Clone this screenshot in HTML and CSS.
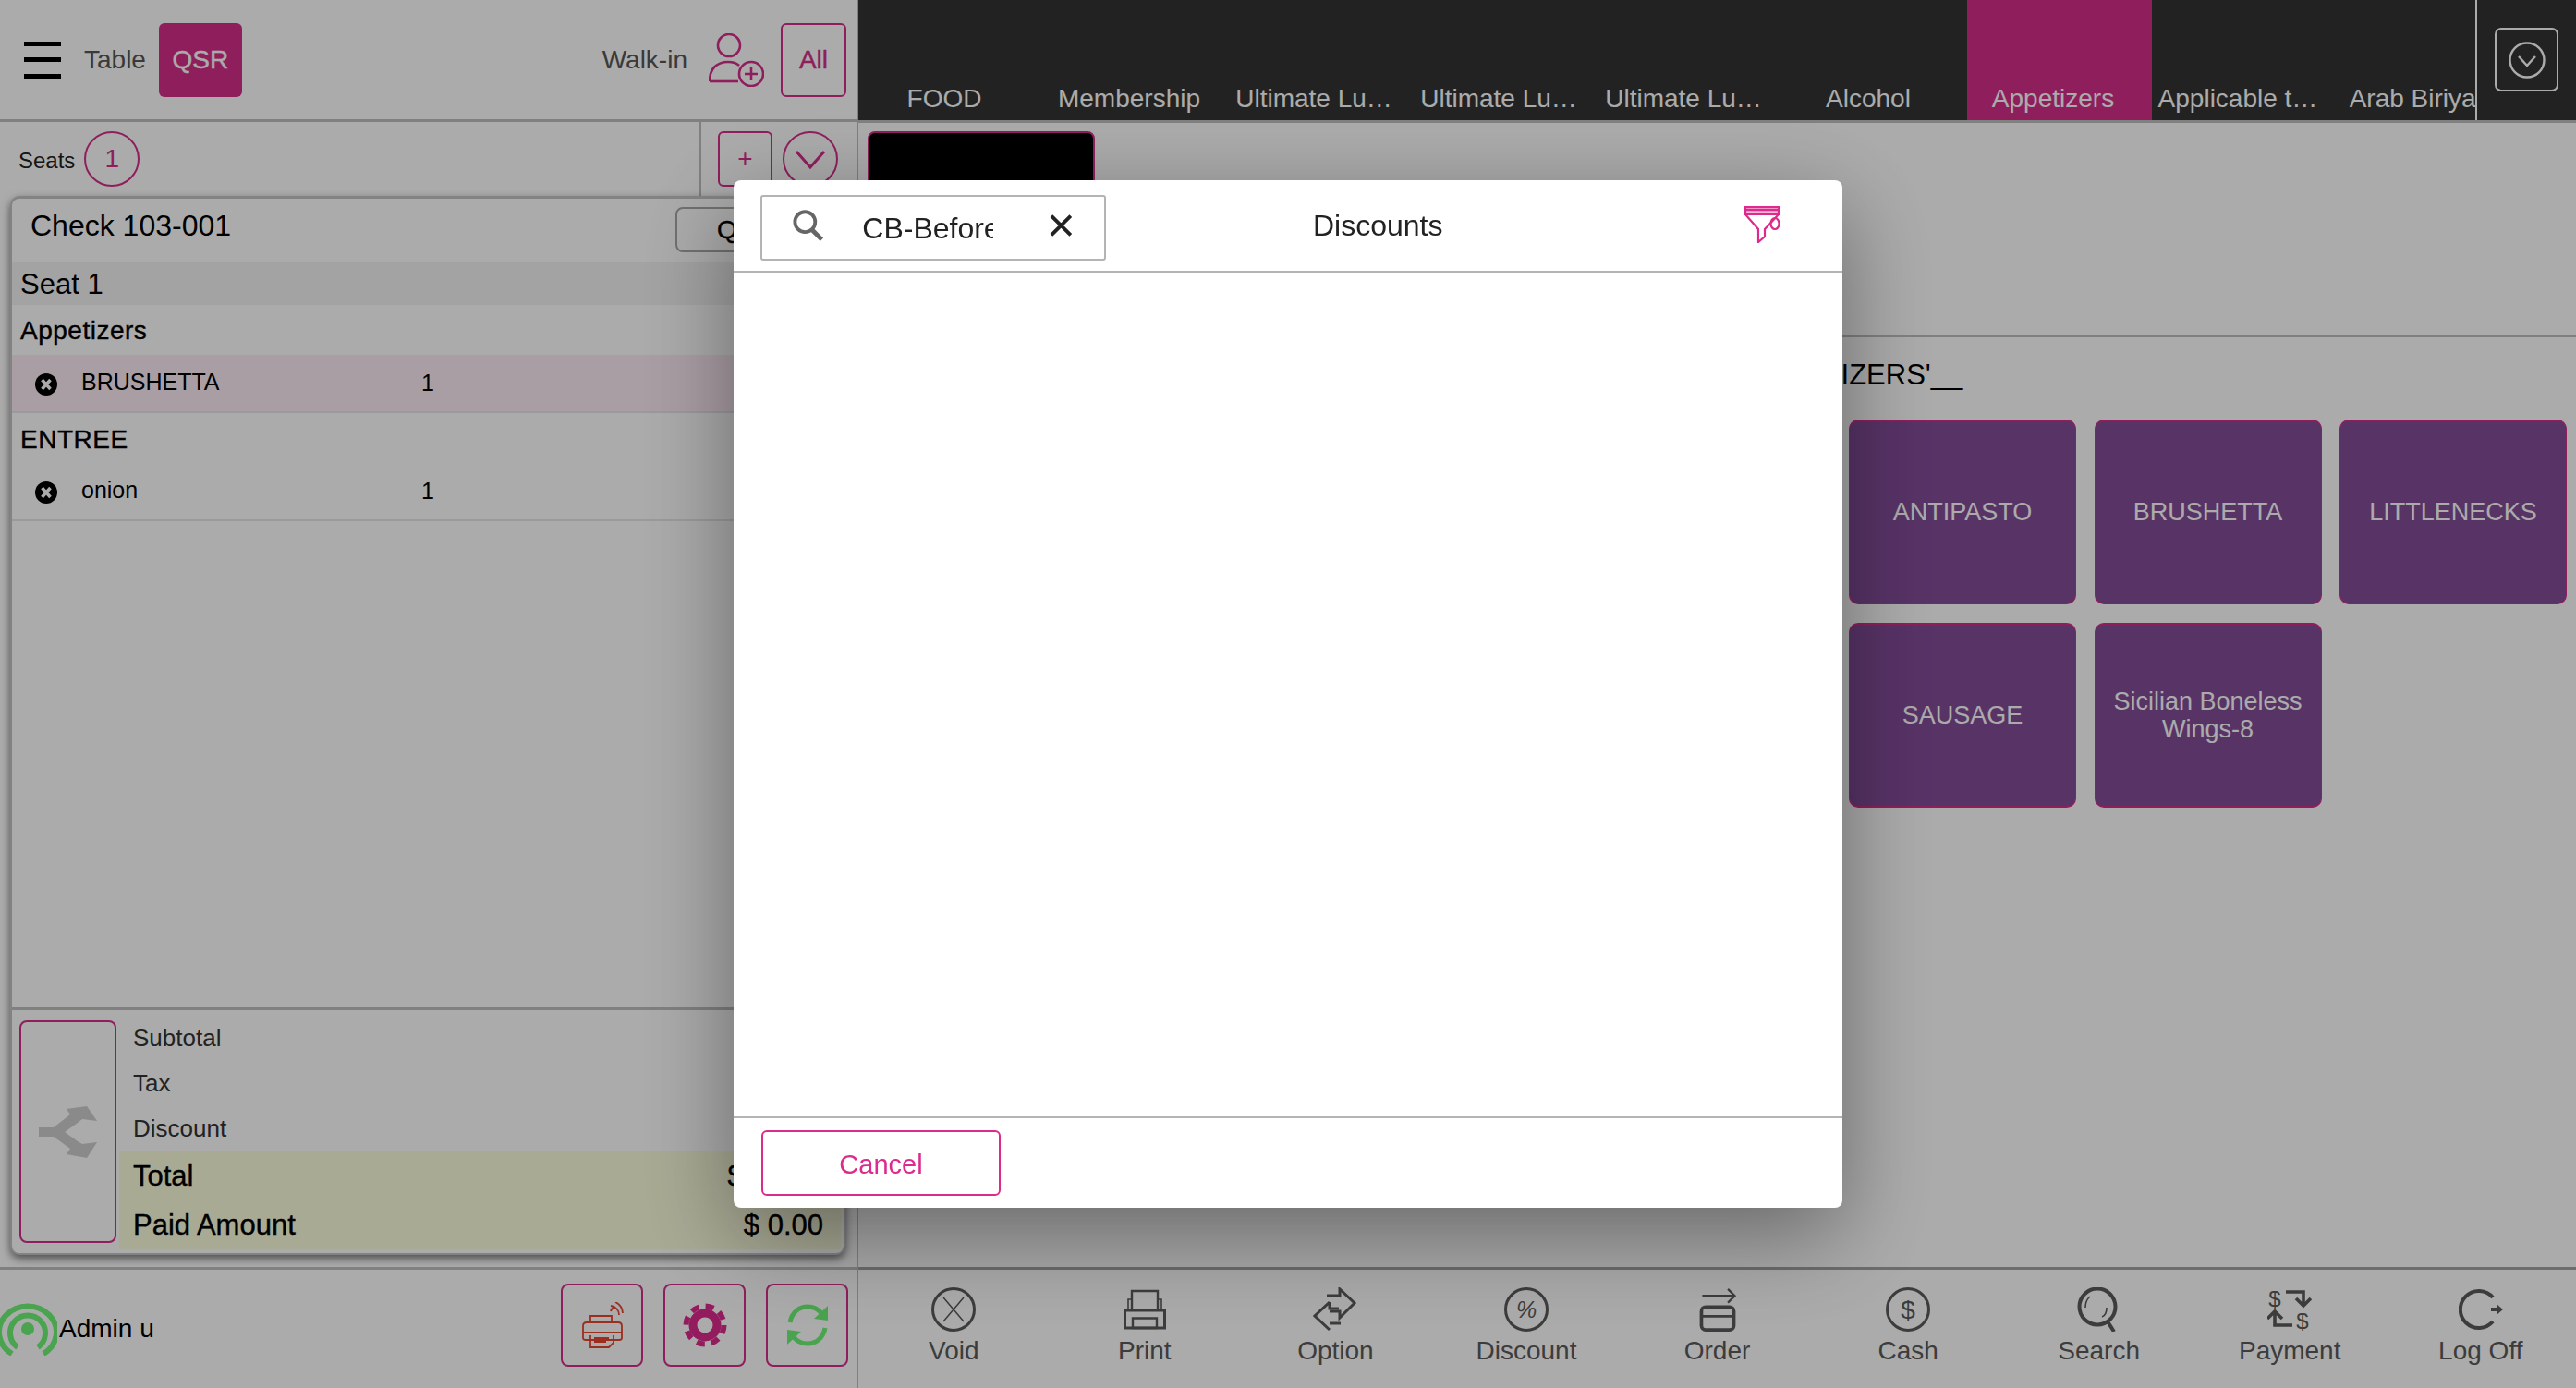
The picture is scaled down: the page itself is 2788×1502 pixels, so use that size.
FILE: index.html
```html
<!DOCTYPE html>
<html lang="en">
<head>
  <meta charset="UTF-8">
  <title>POS - Discounts</title>
  <link rel="stylesheet" href="styles.css">
</head>
<body>

  <div class="app">

    <!-- left: order panel -->
    <section class="order-panel">
      <header class="order-top">
        <div class="hamburger"><span></span><span></span><span></span></div>
        <span class="table-label">Table</span>
        <button class="qsr-btn">QSR</button>
        <span class="walkin-label">Walk-in</span>
        <svg class="walkin-icon" width="60" height="58" viewBox="0 0 60 58" fill="none" stroke="#d62e8a" stroke-width="2.6">
          <circle cx="22" cy="13" r="12"/>
          <path d="M1 52 C1 38 9 31 21 31 C26 31 30 32 33 35"/>
          <path d="M1 52 H32"/>
          <circle cx="46" cy="44" r="13"/>
          <path d="M46 37 V51 M39 44 H53"/>
        </svg>
        <button class="all-btn">All</button>
      </header>

      <div class="seats-row">
        <span class="seats-label">Seats</span>
        <span class="seat-circle">1</span>
        <div class="seats-tools">
          <button class="plus-btn">+</button>
          <span class="chevron-circle">
            <svg width="36" height="24" viewBox="0 0 36 24" fill="none" stroke="#d62e8a" stroke-width="3"><path d="M3 4 L18 21 L33 4"/></svg>
          </span>
        </div>
      </div>

      <div class="check-card">
        <div class="check-head">
          <span class="check-title">Check 103-001</span>
          <button class="quick-btn">Quick</button>
        </div>
        <div class="seat-row">Seat 1</div>
        <div class="group-row">Appetizers</div>
        <div class="item-row selected">
          <svg class="item-x" width="24" height="24" viewBox="0 0 24 24"><circle cx="12" cy="12" r="12" fill="#000"/><path d="M7.500 7 L16.500 17 M16.500 7 L7.500 17" stroke="#fff" stroke-width="3.500"/></svg>
          <span class="item-name">BRUSHETTA</span>
          <span class="item-qty">1</span>
        </div>
        <div class="group-row entree">ENTREE</div>
        <div class="item-row">
          <svg class="item-x" width="24" height="24" viewBox="0 0 24 24"><circle cx="12" cy="12" r="12" fill="#000"/><path d="M7.500 7 L16.500 17 M16.500 7 L7.500 17" stroke="#fff" stroke-width="3.500"/></svg>
          <span class="item-name">onion</span>
          <span class="item-qty">1</span>
        </div>

        <div class="check-spacer"></div>

        <div class="totals">
          <button class="split-btn">
            <svg width="64" height="56" viewBox="0 0 64 56" fill="#cecece">
              <path d="M0 23 H16 L34 9 L30 3 L52 0 L63 16 L47 14 L42 18 L28 28 L42 38 L47 41 L63 39 L52 56 L30 52 L34 46 L16 33 H0 Z"/>
            </svg>
          </button>
          <div class="totals-rows">
            <div class="total-row"><span>Subtotal</span><span>$ 10.00</span></div>
            <div class="total-row"><span>Tax</span><span>$ 0.00</span></div>
            <div class="total-row"><span>Discount</span><span>$ 0.00</span></div>
            <div class="total-band">
              <div class="band-row"><span>Total</span><span>$ 10.00</span></div>
              <div class="band-row"><span>Paid Amount</span><span>$ 0.00</span></div>
            </div>
          </div>
        </div>
      </div>

      <footer class="status-bar">
        <svg class="signal-icon" width="62" height="58" viewBox="0 0 62 58" fill="none" stroke="#6ef376" stroke-width="6">
          <circle cx="30" cy="29" r="7" fill="#6ef376" stroke="none"/>
          <path d="M19 49 A19 19 0 1 1 41 49"/>
          <path d="M13 56 A31 28 0 1 1 47 56" stroke-width="6"/>
        </svg>
        <span class="admin-label">Admin u</span>
        <button class="tool-btn">
          <svg width="46" height="50" viewBox="0 0 46 50" fill="none" stroke="#e8452f" stroke-width="1.8">
            <path d="M2 26 Q2 22 6 22 H40 Q44 22 44 26 V39 Q44 41 41 41 H5 Q2 41 2 39 Z"/>
            <path d="M10 22 V15 H33 V22"/>
            <path d="M2 33 H44"/>
            <path d="M10 36 V49 H30 L35 44 V36"/>
            <path d="M14 39 H30 M14 43 H27"/>
            <path d="M32 10 A5 5 0 0 1 36 6 M32 4 A10 10 0 0 1 41 14 M37 0 A14 14 0 0 1 45 12"/>
          </svg>
        </button>
        <button class="tool-btn">
          <svg width="50" height="50" viewBox="0 0 50 50" fill="none" stroke="#dc2b8c">
            <circle cx="25" cy="25" r="13" stroke-width="9"/>
            <circle cx="25" cy="25" r="20.5" stroke-width="6" stroke-dasharray="9 7.1"/>
          </svg>
        </button>
        <button class="tool-btn">
          <svg width="50" height="46" viewBox="0 0 50 46" fill="none" stroke="#6ef376" stroke-width="5">
            <path d="M6 20 C8 9 16 3 25 3 C31 3 36 5 40 10"/>
            <path d="M44 26 C42 37 34 43 25 43 C19 43 14 41 10 36"/>
            <path d="M47 2 L47 18 L32 16 Z" fill="#6ef376" stroke="none"/>
            <path d="M3 44 L3 28 L18 30 Z" fill="#6ef376" stroke="none"/>
          </svg>
        </button>
      </footer>
    </section>

    <!-- right: menu -->
    <section class="menu-panel">
      <div class="tab-bar">
        <nav class="tabs">
          <a class="tab">FOOD</a>
          <a class="tab">Membership</a>
          <a class="tab">Ultimate Lu…</a>
          <a class="tab">Ultimate Lu…</a>
          <a class="tab">Ultimate Lu…</a>
          <a class="tab">Alcohol</a>
          <a class="tab active">Appetizers</a>
          <a class="tab">Applicable t…</a>
          <a class="tab">Arab Biriyani</a>
        </nav>
        <div class="tab-more">
          <button class="tab-more-btn">
            <svg width="40" height="40" viewBox="0 0 40 40" fill="none" stroke="#fff" stroke-width="2.4">
              <circle cx="20" cy="20" r="18.5"/>
              <path d="M11 16 L20 26 L29 16"/>
            </svg>
          </button>
        </div>
      </div>

      <div class="sub-groups">
        <div class="black-tile"></div>
      </div>

      <div class="menu-items">
        <h2 class="menu-title">'APPETIZERS'__</h2>
        <div class="menu-grid">
          <div class="menu-card">ANTIPASTO</div>
          <div class="menu-card">BRUSHETTA</div>
          <div class="menu-card">LITTLENECKS</div>
          <div class="menu-card">SAUSAGE</div>
          <div class="menu-card">Sicilian Boneless Wings-8</div>
        </div>
      </div>

      <footer class="action-bar">
        <div class="action">
          <svg width="48" height="48" viewBox="0 0 48 48" fill="none" stroke="#5a5a5a" stroke-width="3">
            <circle cx="24" cy="24" r="22.5"/>
            <path d="M13 11 L35 37 M35 11 L13 37" stroke-width="1.5"/>
          </svg>
          <span>Void</span>
        </div>
        <div class="action">
          <svg width="48" height="48" viewBox="0 0 48 48" fill="none" stroke="#5a5a5a" stroke-width="3">
            <path d="M10 25 V4 H38 V25" stroke-width="2.4"/>
            <path d="M10 13 H6 V25 M38 13 H42 V25" stroke-width="1.6"/>
            <path d="M2.500 25 H45.500 V44 H2.500 Z"/>
            <path d="M11 33.500 H37 V44 H11 Z" stroke-width="2.400"/>
          </svg>
          <span>Print</span>
        </div>
        <div class="action">
          <svg width="48" height="48" viewBox="0 0 48 48" fill="none" stroke="#5a5a5a" stroke-width="3">
            <path d="M15 9 H29 V2 L45 17 L29 33 V26 H18"/>
            <path d="M18 16 L2 31 L18 46 M18 39 H30 M18 16 V23 H28"/>
          </svg>
          <span>Option</span>
        </div>
        <div class="action">
          <svg width="48" height="48" viewBox="0 0 48 48" fill="none" stroke="#5a5a5a" stroke-width="3">
            <circle cx="24" cy="24" r="22.5"/>
            <text class="icon-glyph" x="24" y="33" text-anchor="middle" font-size="25" font-style="italic">%</text>
          </svg>
          <span>Discount</span>
        </div>
        <div class="action">
          <svg width="48" height="52" viewBox="0 0 48 52" fill="none" stroke="#5a5a5a" stroke-width="4">
            <path d="M6 10 H42 M36 2 L44 10 L36 18" stroke-width="2.500"/>
            <rect x="5" y="23" width="38" height="27" rx="5"/>
            <path d="M5 34 H43" stroke-width="3"/>
          </svg>
          <span>Order</span>
        </div>
        <div class="action">
          <svg width="48" height="48" viewBox="0 0 48 48" fill="none" stroke="#5a5a5a" stroke-width="3">
            <circle cx="24" cy="24" r="22.5"/>
            <text class="icon-glyph" x="24" y="34" text-anchor="middle" font-size="28">$</text>
          </svg>
          <span>Cash</span>
        </div>
        <div class="action">
          <svg width="48" height="48" viewBox="0 0 48 48" fill="none" stroke="#5a5a5a" stroke-width="4">
            <circle cx="22" cy="21" r="19.500"/>
            <path d="M33 37 L40 48"/>
            <path d="M9 22 Q9 14 14 10 M32 22 Q32 30 27 32" stroke-width="1.600"/>
          </svg>
          <span>Search</span>
        </div>
        <div class="action">
          <svg width="48" height="48" viewBox="0 0 48 48" fill="none" stroke="#5a5a5a" stroke-width="4">
            <text class="icon-glyph" x="8" y="21" text-anchor="middle" font-size="24">$</text>
            <text class="icon-glyph" x="38" y="45" text-anchor="middle" font-size="24">$</text>
            <path d="M20 5 H39 V19 M31 12 L39 20 L47 12" stroke-width="3.600"/>
            <path d="M27 41 H8 V27 M0 34 L8 26 L16 34" stroke-width="3.600"/>
          </svg>
          <span>Payment</span>
        </div>
        <div class="action">
          <svg width="48" height="48" viewBox="0 0 48 48" fill="none" stroke="#5a5a5a" stroke-width="4">
            <path d="M37 11 A20 20 0 1 0 37 37"/>
            <path d="M35 22 H41 V18 L48 24 L41 30 V26 H35 Z" fill="#5a5a5a" stroke="none"/>
          </svg>
          <span>Log Off</span>
        </div>
      </footer>
    </section>
  </div>

  <!-- discounts dialog -->
  <div class="overlay">
    <div class="modal">
      <div class="modal-head">
        <div class="search-box">
          <svg width="36" height="36" viewBox="0 0 36 36" fill="none" stroke="#666" stroke-width="4">
            <circle cx="14" cy="14" r="11.500"/>
            <path d="M22 23 L33 34" stroke-width="5"/>
          </svg>
          <input class="search-input" type="text" value="CB-Before">
          <svg width="26" height="26" viewBox="0 0 26 26" fill="none" stroke="#222" stroke-width="4">
            <path d="M2 2 L24 24 M24 2 L2 24"/>
          </svg>
        </div>
        <span class="modal-title">Discounts</span>
        <svg class="filter-icon" width="40" height="40" viewBox="0 0 40 40" fill="none" stroke="#dc2b8c" stroke-width="2.200">
          <path d="M1 1 H37 V9 H1 Z" fill="#f7b6da"/>
          <path d="M1 4 H37" stroke-width="2.500"/>
          <path d="M1 9 L15 25 V39 L22 33 V25 L37 9"/>
          <ellipse cx="33" cy="19" rx="4.500" ry="6"/>
        </svg>
      </div>
      <div class="modal-body"></div>
      <div class="modal-foot">
        <button class="cancel-btn">Cancel</button>
      </div>
    </div>
  </div>

</body>
</html>
```

FILE: styles.css
```css
* {
  box-sizing: border-box;
}
html, body {
  margin: 0;
  height: 100%;
}
body {
  font-family: "Liberation Sans", Arial, sans-serif;
  background-color: #fff;
  color: #000;
  overflow: hidden;
}
button {
  font-family: inherit;
  background: none;
  padding: 0;
  cursor: pointer;
}
.app {
  display: flex;
  height: 1502px;
}

/* order panel */
.order-panel {
  width: 929px;
  flex-shrink: 0;
  display: flex;
  flex-direction: column;
  border-right: 2px solid #bfbfbf;
}
.order-top {
  height: 132px;
  flex-shrink: 0;
  display: flex;
  align-items: center;
  padding: 0 11px 0 26px;
  border-bottom: 3px solid #bfbfbf;
}
.hamburger {
  width: 40px;
  height: 40px;
  display: flex;
  flex-direction: column;
  justify-content: space-between;
}
.hamburger span {
  display: block;
  height: 5px;
  background-color: #000;
}
.table-label {
  margin-left: 25px;
  font-size: 28px;
  color: #575757;
}
.qsr-btn {
  width: 90px;
  height: 80px;
  margin-left: 14px;
  border: none;
  border-radius: 6px;
  background-color: #d62e8a;
  color: #fff;
  font-size: 28px;
  -webkit-text-stroke: 0.4px;
}
.walkin-label {
  margin-left: auto;
  font-size: 28px;
  color: #575757;
}
.walkin-icon {
  margin-left: 23px;
}
.all-btn {
  width: 71px;
  height: 80px;
  margin-left: 18px;
  border: 2px solid #d62e8a;
  border-radius: 6px;
  color: #d62e8a;
  font-size: 28px;
  -webkit-text-stroke: 0.4px;
}
.seats-row {
  height: 80px;
  flex-shrink: 0;
  display: flex;
  align-items: center;
  padding-left: 20px;
}
.seats-label {
  font-size: 24px;
  color: #222;
  margin-top: 3px;
}
.seat-circle {
  width: 60px;
  height: 60px;
  margin-left: 10px;
  border: 2px solid #d62e8a;
  border-radius: 50%;
  color: #d62e8a;
  font-size: 28px;
  display: flex;
  align-items: center;
  justify-content: center;
}
.seats-tools {
  margin-left: auto;
  height: 100%;
  width: 170px;
  display: flex;
  align-items: center;
  gap: 11px;
  padding-left: 18px;
  border-left: 2px solid #bfbfbf;
}
.plus-btn {
  width: 59px;
  height: 60px;
  border: 2px solid #d62e8a;
  border-radius: 6px;
  color: #d62e8a;
  font-size: 28px;
}
.chevron-circle {
  width: 60px;
  height: 60px;
  border: 2px solid #d62e8a;
  border-radius: 50%;
  display: flex;
  align-items: center;
  justify-content: center;
}

/* check card */
.check-card {
  flex: 1;
  margin: 0 12px 13px 11px;
  display: flex;
  flex-direction: column;
  background-color: #fff;
  border: 2px solid #c4c4c4;
  border-top-width: 3px;
  border-radius: 10px;
  box-shadow: 0 4px 10px rgba(0,0,0,0.55);
}
.check-head {
  height: 69px;
  flex-shrink: 0;
  display: flex;
  align-items: flex-start;
  justify-content: space-between;
  padding: 9px 0 0 20px;
}
.check-title {
  font-size: 32px;
  line-height: 40px;
}
.quick-btn {
  width: 182px;
  height: 49px;
  text-align: left;
  padding-left: 43px;
  border: 2px solid #a8a8a8;
  border-radius: 8px;
  font-size: 28px;
  -webkit-text-stroke: 0.4px;
}
.seat-row {
  height: 46px;
  flex-shrink: 0;
  padding: 1px 0 0 9px;
  background-color: #f3f3f3;
  font-size: 31px;
  line-height: 46px;
}
.group-row {
  height: 54px;
  flex-shrink: 0;
  padding-left: 9px;
  font-size: 28px;
  line-height: 55px;
  letter-spacing: 0.5px;
  -webkit-text-stroke: 0.4px #000;
}
.group-row.entree {
  line-height: 57px;
}
.item-row {
  height: 63px;
  flex-shrink: 0;
  display: flex;
  align-items: center;
  padding-left: 25px;
  border-bottom: 2px solid #e6e6ea;
  font-size: 25px;
}
.item-row.selected {
  background-color: #feecf6;
}
.item-x {
  flex-shrink: 0;
  margin-top: 3px;
}
.item-name {
  width: 368px;
  margin-left: 26px;
  padding-bottom: 3px;
}
.item-qty {
  padding-bottom: 1px;
}
.check-spacer {
  flex: 1;
}
.totals {
  height: 266px;
  flex-shrink: 0;
  display: flex;
  padding: 11px 3px 3px 8px;
  border-top: 3px solid #bfbfbf;
}
.split-btn {
  width: 105px;
  height: 241px;
  flex-shrink: 0;
  border: 2px solid #d62e8a;
  border-radius: 8px;
  display: flex;
  align-items: center;
  justify-content: center;
}
.totals-rows {
  flex: 1;
  margin: -5px 0 0 3px;
  display: flex;
  flex-direction: column;
}
.total-row {
  height: 49px;
  display: flex;
  align-items: center;
  justify-content: space-between;
  padding: 0 19px 0 15px;
  font-size: 26px;
  color: #333;
}
.total-band {
  background-color: #fcfedd;
}
.band-row {
  height: 53px;
  display: flex;
  align-items: center;
  justify-content: space-between;
  padding: 0 19px 0 15px;
  font-size: 31px;
  -webkit-text-stroke: 0.4px #000;
}

/* bottom left */
.status-bar {
  height: 131px;
  flex-shrink: 0;
  display: flex;
  align-items: center;
  gap: 22px;
  padding: 0 9px 8px 0;
  border-top: 3px solid #bfbfbf;
}
.signal-icon {
  flex-shrink: 0;
  margin: 8px -20px 0 0;
}
.admin-label {
  font-size: 28px;
  margin: 8px auto 0 0;
}
.tool-btn {
  width: 89px;
  height: 90px;
  border: 2px solid #d62e8a;
  border-radius: 8px;
  display: flex;
  align-items: center;
  justify-content: center;
}

/* menu panel */
.menu-panel {
  flex: 1;
  min-width: 0;
  display: flex;
  flex-direction: column;
}
.tab-bar {
  height: 133px;
  flex-shrink: 0;
  display: flex;
  background-color: #343433;
  border-bottom: 3px solid #bfbfbf;
}
.tabs {
  width: 1752px;
  display: flex;
  overflow: hidden;
  border-right: 2px solid #fff;
}
.tab {
  width: 200px;
  flex-shrink: 0;
  padding: 88px 14px 0 0;
  color: #fff;
  font-size: 28px;
  line-height: 38px;
  text-align: center;
  white-space: nowrap;
}
.tab.active {
  background-color: #d62e8a;
}
.tab-more {
  flex: 1;
  padding: 30px 0 0 19px;
}
.tab-more-btn {
  width: 69px;
  height: 69px;
  border: 2px solid #fff;
  border-radius: 7px;
  display: flex;
  align-items: center;
  justify-content: center;
}
.sub-groups {
  height: 232px;
  flex-shrink: 0;
  padding: 9px 0 0 10px;
  border-bottom: 3px solid #bfbfbf;
}
.black-tile {
  width: 246px;
  height: 198px;
  background-color: #000;
  border: 2px solid #d62e8a;
  border-radius: 8px;
}
.menu-items {
  flex: 1;
  min-height: 0;
}
.menu-title {
  margin: 21px 0 0 956px;
  font-size: 31px;
  font-weight: normal;
  line-height: 40px;
}
.menu-grid {
  display: grid;
  grid-template-columns: repeat(3, 246px);
  grid-auto-rows: 200px;
  gap: 20px 19.5px;
  justify-content: end;
  margin-top: 28px;
  padding-right: 10px;
}
.menu-card {
  display: flex;
  align-items: center;
  justify-content: center;
  padding: 0 15px;
  background-color: #834c99;
  border: 1px solid #d62e8a;
  border-width: 2px 1px;
  border-radius: 10px;
  color: #fff;
  font-size: 27px;
  line-height: 30px;
  text-align: center;
}
.action-bar {
  height: 131px;
  flex-shrink: 0;
  display: flex;
  border-top: 3px solid #a3a3a3;
}
.action {
  flex: 1;
  display: flex;
  flex-direction: column;
  align-items: center;
  padding-top: 19px;
  color: #5a5a5a;
  font-size: 28px;
}
.action svg {
  height: 48px;
  flex-shrink: 0;
}
.action span {
  line-height: 34px;
  margin-top: 4px;
}
.icon-glyph {
  fill: #5a5a5a;
  stroke: none;
  font-family: "Liberation Sans", Arial, sans-serif;
}

/* dialog */
.overlay {
  position: fixed;
  top: 0;
  left: 0;
  right: 0;
  bottom: 0;
  display: flex;
  align-items: center;
  justify-content: center;
  background-color: rgba(0,0,0,0.33);
}
.modal {
  width: 1200px;
  height: 1112px;
  display: flex;
  flex-direction: column;
  background-color: #fff;
  border-radius: 8px;
  box-shadow: 0 30px 100px rgba(0,0,0,0.4);
}
.modal-head {
  height: 100px;
  flex-shrink: 0;
  display: flex;
  align-items: flex-start;
  padding: 16px 66px 0 29px;
  border-bottom: 2px solid #b4b4b4;
}
.search-box {
  width: 374px;
  height: 71px;
  display: flex;
  align-items: center;
  padding: 0 34px 6px 33px;
  border: 2px solid #b4b4b4;
  border-radius: 3px;
}
.search-input {
  width: 142px;
  margin: 8px 61px 0 41px;
  padding: 0;
  border: none;
  outline: none;
  font-family: inherit;
  font-size: 32px;
  color: #222;
}
.modal-title {
  margin: 15px 0 0 224px;
  font-size: 32px;
  line-height: 36px;
  color: #222;
}
.filter-icon {
  margin: 12px 0 0 auto;
}
.modal-body {
  flex: 1;
}
.modal-foot {
  height: 99px;
  flex-shrink: 0;
  padding: 13px 0 0 30px;
  border-top: 2px solid #b4b4b4;
}
.cancel-btn {
  width: 259px;
  height: 71px;
  padding-top: 4px;
  border: 2px solid #dc2b8c;
  border-radius: 6px;
  color: #dc2b8c;
  font-size: 29px;
}
```
